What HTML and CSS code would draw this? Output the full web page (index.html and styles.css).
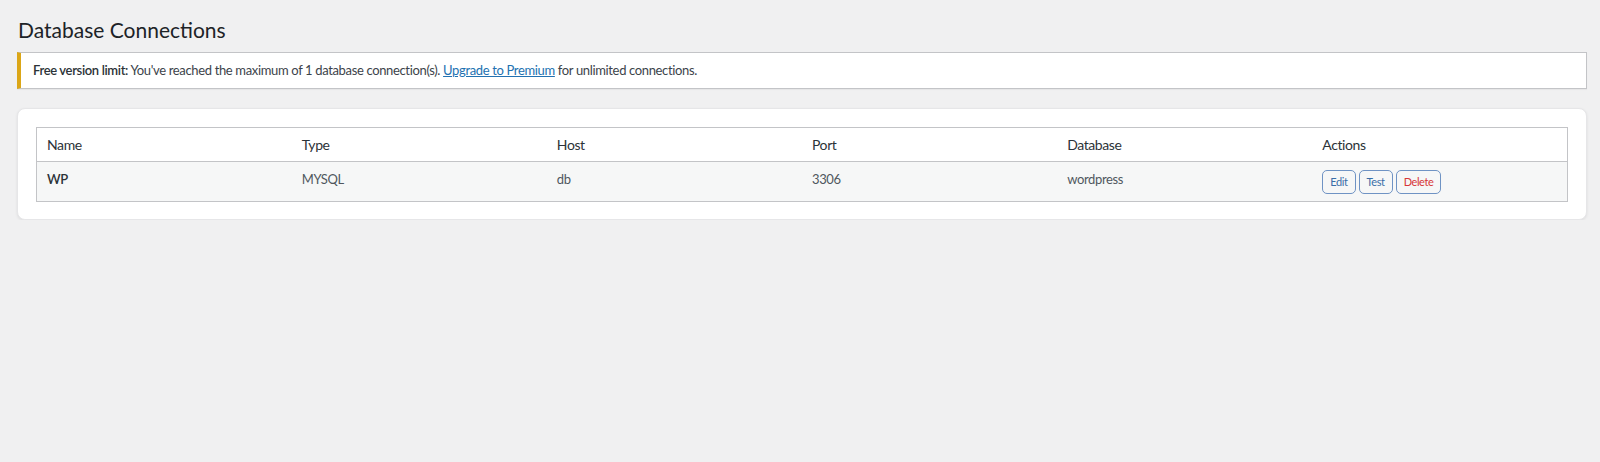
FILE: index.html
```html
<!DOCTYPE html>
<html lang="en">
<head>
<meta charset="utf-8">
<title>Database Connections</title>
<link rel="stylesheet" href="styles.css">
</head>
<body>
<div class="wrap">
  <h1 class="page-title">Database Connections</h1>
  <div class="notice">
    <p><strong>Free version limit:</strong> You've reached the maximum of 1 database connection(s). <a href="#">Upgrade to Premium</a> for unlimited connections.</p>
  </div>
  <div class="card">
    <table class="conn-table">
      <thead>
        <tr>
          <th>Name</th>
          <th>Type</th>
          <th>Host</th>
          <th>Port</th>
          <th>Database</th>
          <th>Actions</th>
        </tr>
      </thead>
      <tbody>
        <tr>
          <td class="name">WP</td>
          <td>MYSQL</td>
          <td>db</td>
          <td>3306</td>
          <td>wordpress</td>
          <td>
            <div class="actions">
              <button class="btn" type="button">Edit</button>
              <button class="btn" type="button">Test</button>
              <button class="btn btn-delete" type="button">Delete</button>
            </div>
          </td>
        </tr>
      </tbody>
    </table>
  </div>
</div>
</body>
</html>
```

FILE: styles.css
```css
html, body {
  margin: 0;
  padding: 0;
  background: #f0f0f1;
}

body {
  font-family: Lato, "Open Sans", "Liberation Sans", sans-serif;
  color: #3c434a;
  font-size: 13px;
  letter-spacing: -0.35px;
}

.wrap {
  padding: 0 13px 0 17px;
}

.page-title {
  margin: 0;
  padding: 15px 0 0 1px;
  font-size: 21px;
  font-weight: 400;
  line-height: 30px;
  letter-spacing: 0;
  color: #1d2327;
}

.notice {
  margin-top: 7px;
  background: #fff;
  border: 1px solid #c3c4c7;
  border-left: 4px solid #dba617;
  box-shadow: 0 1px 1px rgba(0, 0, 0, 0.04);
  padding: 0 12px;
}

.notice p {
  margin: 0;
  padding: 8px 0;
  line-height: 19px;
  font-size: 13px;
  color: #3c434a;
}

.notice strong {
  font-weight: 600;
  color: #2c3338;
}

.notice a {
  color: #2271b1;
  text-decoration: underline;
}

.card {
  margin-top: 19px;
  background: #fff;
  border-radius: 8px;
  box-shadow: 0 1px 3px rgba(0, 0, 0, 0.08);
  border: 1px solid #e6e6e8;
  padding: 18px 18px 17px 18px;
}

.conn-table {
  width: 100%;
  border-collapse: collapse;
  table-layout: fixed;
  border: 1px solid #c3c4c7;
}

.conn-table th {
  text-align: left;
  font-weight: 400;
  font-size: 14px;
  line-height: 17px;
  letter-spacing: -0.4px;
  color: #2c3338;
  padding: 8px 10px;
  border-bottom: 1px solid #c3c4c7;
  background: #fff;
}

.conn-table td {
  font-size: 13px;
  line-height: 19px;
  color: #50575e;
  padding: 8px 10px 7px;
  background: #f6f7f7;
  vertical-align: top;
}

.conn-table td.name {
  font-weight: 600;
  color: #2c3338;
}

.actions {
  display: flex;
  gap: 3px;
}

.btn {
  font-family: inherit;
  font-size: 11px;
  letter-spacing: -0.4px;
  height: 24px;
  padding: 0 7px;
  line-height: 22px;
  border: 1px solid #6f93c4;
  border-radius: 5px;
  background: #f6f7f7;
  color: #3a6ea8;
  cursor: pointer;
}

.btn-delete {
  color: #d63638;
}
```
